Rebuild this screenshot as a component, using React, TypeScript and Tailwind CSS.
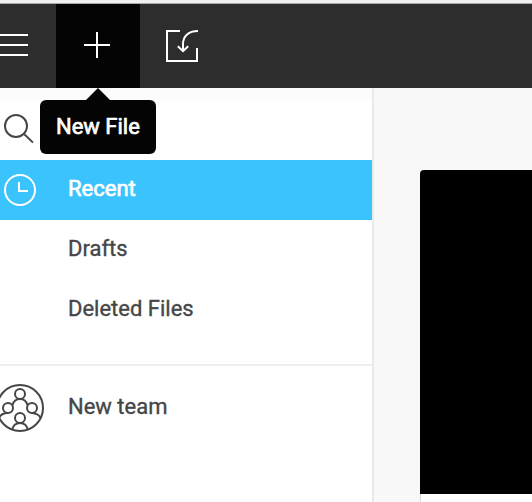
import type { ReactNode } from "react";

function MenuIcon() {
  return (
    <svg className="h-[84px] w-14 shrink-0" viewBox="0 4 56 84" stroke="#fff" strokeWidth="2">
      <path d="M0 35H28M0 45H28M0 55H28" />
    </svg>
  );
}

function PlusIcon() {
  return (
    <svg className="h-[84px] w-[84px]" viewBox="56 4 84 84" stroke="#fff" strokeWidth="2">
      <path d="M84 45H110M97 32V58" />
    </svg>
  );
}

function ImportIcon() {
  return (
    <svg className="h-[84px] w-[84px] shrink-0" viewBox="140 4 84 84" fill="none" stroke="#fff" strokeWidth="2">
      <path d="M180 31H167V61H197V48" />
      <path d="M198 31C188 31 183 36.5 183 44V51" />
      <path d="M177.8 46.2L183 51.2L188.2 46.2" />
    </svg>
  );
}

function SearchIcon() {
  return (
    <svg className="h-[72px] w-10 shrink-0" viewBox="0 88 40 72" fill="none" stroke="#464646" strokeWidth="2">
      <circle cx="16" cy="126" r="11" />
      <path d="M23.8 133.8L33 142.6" />
    </svg>
  );
}

function ClockIcon() {
  return (
    <svg className="h-[60px] w-[68px]" viewBox="0 160 68 60" fill="none" stroke="#fff" strokeWidth="2">
      <circle cx="20" cy="190" r="15" />
      <path d="M19 182V191H28" />
    </svg>
  );
}

function TeamIcon() {
  return (
    <svg className="h-[60px] w-[68px]" viewBox="0 378 68 60" fill="none" stroke="#464646" strokeWidth="2">
      <circle cx="20" cy="408" r="23" />
      <circle cx="20" cy="394" r="5" />
      <circle cx="8" cy="408" r="5" />
      <circle cx="32" cy="408" r="5" />
      <circle cx="20" cy="418" r="5" />
      <path d="M12.5 405C13.5 401.5 16 399 20 399S26.5 401.5 27.5 405" />
      <path d="M-1 418C0 415.5 3 413.2 8 413" />
      <path d="M41 418.5C39.5 415.5 37 413.2 32 413" />
      <path d="M12 430C13 425.5 16 423 20 423S27 425.5 28 430" />
    </svg>
  );
}

function Row({ label, icon, active = false }: { label: string; icon?: ReactNode; active?: boolean }) {
  return (
    <div className={`flex h-[60px] items-center ${active ? "bg-[#3bc3fd] text-white [-webkit-text-stroke:0.7px_currentColor]" : "text-[#464646] [-webkit-text-stroke:0.35px_currentColor]"}`}>
      <div className="w-[68px] shrink-0">{icon}</div>
      <span className="-mt-0.5 whitespace-nowrap">{label}</span>
    </div>
  );
}

export default function App() {
  return (
    <div className="flex h-[502px] w-[532px] flex-col overflow-hidden bg-white font-['Roboto',sans-serif] text-[22px] leading-[28px]">
      <div className="h-1 shrink-0 border-b border-[#aaa] bg-[#f0f0f0]" />
      <header className="flex h-[84px] shrink-0 bg-[#2d2d2d]">
        <MenuIcon />
        <div className="relative h-[84px] w-[84px] bg-[#040404]">
          <PlusIcon />
          <div className="absolute top-[84px] -left-4 z-10 flex w-[116px] flex-col">
            <svg className="ml-[46px] h-3 w-6" viewBox="0 0 24 12" fill="#040404">
              <path d="M0 12L12 0L24 12Z" />
            </svg>
            <div className="flex h-[54px] items-center rounded-[6px] bg-[#040404] pl-4 text-white [-webkit-text-stroke:0.7px_currentColor]">
              <span className="whitespace-nowrap">New File</span>
            </div>
          </div>
        </div>
        <ImportIcon />
      </header>
      <div className="flex min-h-0 flex-1">
        <aside className="w-[374px] shrink-0 border-r-2 border-[#eaeaea] bg-white">
          <div className="h-[72px] bg-linear-to-b from-[#fcfcfc] from-[12px] to-white to-[12px]">
            <SearchIcon />
          </div>
          <Row label="Recent" icon={<ClockIcon />} active />
          <Row label="Drafts" />
          <Row label="Deleted Files" />
          <div className="mt-6 h-0.5 bg-[#eee]" />
          <div className="pt-3">
            <Row label="New team" icon={<TeamIcon />} />
          </div>
        </aside>
        <main className="flex-1 bg-[#f8f8f8] pt-[82px] pl-[46px]">
          <div className="h-[324px] rounded-tl-[4px] bg-black" />
          <div className="h-2 border-l border-[#d8d8d8] bg-white" />
        </main>
      </div>
    </div>
  );
}
